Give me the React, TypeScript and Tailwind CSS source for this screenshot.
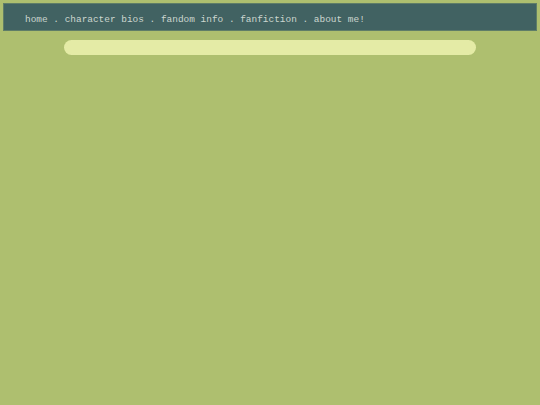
export default function App() {
  const links = ["home", "character bios", "fandom info", "fanfiction", "about me!"];
  return (
    <div className="min-h-[405px] bg-[#aebf6f] p-[3px]" style={{ fontFamily: '"Liberation Mono", "DejaVu Sans Mono", monospace' }}>
      <nav className="h-[28px] bg-[#416262] border border-[#5f7d68] flex items-center pt-[7px] pl-[21px] text-[9.45px] text-[#ccd6cf] whitespace-pre">
        {links.join(" . ")}
      </nav>
      <div className="mt-[9px] ml-[61px] w-[412px] h-[15px] rounded-full bg-[#e4eba6]" />
    </div>
  );
}
